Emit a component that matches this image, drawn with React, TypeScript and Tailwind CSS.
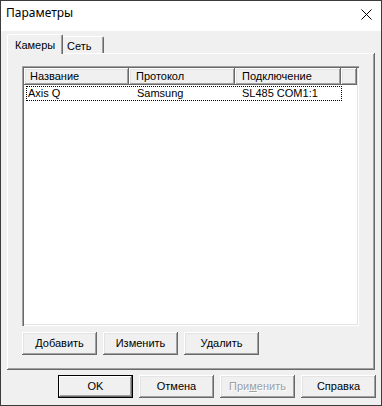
const raised =
  'shadow-[inset_-1px_-1px_0_#696969,inset_1px_1px_0_#ffffff,inset_-2px_-2px_0_#a0a0a0,inset_2px_2px_0_#e3e3e3]'

function Button({ children, wide = 75, isDefault = false, disabled = false }: { children: React.ReactNode; wide?: number; isDefault?: boolean; disabled?: boolean }) {
  return (
    <div
      className={`h-[23px] flex items-center justify-center bg-[#f0f0f0] ${
        isDefault
          ? 'shadow-[inset_0_0_0_1px_#000000,inset_-2px_-2px_0_#696969,inset_2px_2px_0_#ffffff,inset_-3px_-3px_0_#a0a0a0]'
          : 'shadow-[inset_-1px_-1px_0_#696969,inset_1px_1px_0_#ffffff,inset_-2px_-2px_0_#a0a0a0,inset_2px_2px_0_#e3e3e3]'
      } ${disabled ? 'text-[#a0a0a0] [text-shadow:1px_1px_0_#ffffff]' : 'text-black'}`}
      style={{ width: wide }}
    >
      {children}
    </div>
  )
}

export default function App() {
  return (
    <div className="w-[382px] h-[406px] border border-[#3c3c3c] bg-[#f0f0f0] flex flex-col font-['Liberation_Sans',Arial,sans-serif] text-[11px] text-black">
      {/* Title bar */}
      <div className="h-[30px] bg-white flex items-start justify-between pl-[5px] pr-[9px] pt-[4px]">
        <span className="font-['Noto_Sans',sans-serif] text-[12px] leading-[16px]">Параметры</span>
        <svg width="11" height="11" viewBox="0 0 11 11" className="mt-[4px]">
          <path d="M0.5 0.5 L10.5 10.5 M10.5 0.5 L0.5 10.5" stroke="#000" strokeWidth="1" fill="none" />
        </svg>
      </div>

      {/* Tabs */}
      <div className="pl-[6px] pt-[3px] flex items-end h-[22px]">
        <div className="relative z-10 -mb-px h-[20px] w-[56px] bg-[#f0f0f0] border-t border-l border-white border-r border-r-[#696969] rounded-t-[2px] shadow-[inset_-1px_0_0_#a0a0a0] flex items-start pl-[7px] pt-[2px]">
          Камеры
        </div>
        <div className="h-[17px] w-[41px] bg-[#f0f0f0] border-t border-white border-r border-r-[#696969] rounded-tr-[2px] shadow-[inset_-1px_0_0_#a0a0a0] flex items-start pl-[4px] pt-[1px]">
          Сеть
        </div>
      </div>

      {/* Tab panel */}
      <div className={`ml-[6px] w-[368px] h-[317px] bg-[#f0f0f0] pt-[13px] pl-[15px] flex flex-col shadow-[inset_-1px_-1px_0_#696969,inset_1px_1px_0_#ffffff,inset_-2px_-2px_0_#a0a0a0]`}>
        {/* List view */}
        <div className="w-[337px] h-[260px] bg-white p-[2px] shadow-[inset_1px_1px_0_#a0a0a0,inset_2px_2px_0_#696969,inset_-1px_-1px_0_#ffffff,inset_-2px_-2px_0_#e3e3e3]">
          <div className="flex h-[17px]">
            <div className={`w-[105px] pl-[6px] flex items-center bg-[#f0f0f0] ${raised}`}>Название</div>
            <div className={`w-[106px] pl-[7px] flex items-center bg-[#f0f0f0] ${raised}`}>Протокол</div>
            <div className={`w-[106px] pl-[7px] flex items-center bg-[#f0f0f0] ${raised}`}>Подключение</div>
            <div className={`flex-1 bg-[#f0f0f0] ${raised}`}></div>
          </div>
          <div className="ml-[2px] mt-px w-[316px] h-[15px] border border-dotted border-black flex items-center">
            <div className="w-[110px] pl-px">Axis Q</div>
            <div className="w-[105px]">Samsung</div>
            <div>SL485 COM1:1</div>
          </div>
        </div>

        <div className="mt-[6px] flex gap-[6px]">
          <Button>Добавить</Button>
          <Button>Изменить</Button>
          <Button>Удалить</Button>
        </div>
      </div>

      {/* Dialog buttons */}
      <div className="mt-[5px] flex justify-end gap-[6px] pr-[5px]">
        <Button isDefault>OK</Button>
        <Button>Отмена</Button>
        <Button disabled>
          При<span className="underline">м</span>енить
        </Button>
        <Button>Справка</Button>
      </div>
    </div>
  )
}
